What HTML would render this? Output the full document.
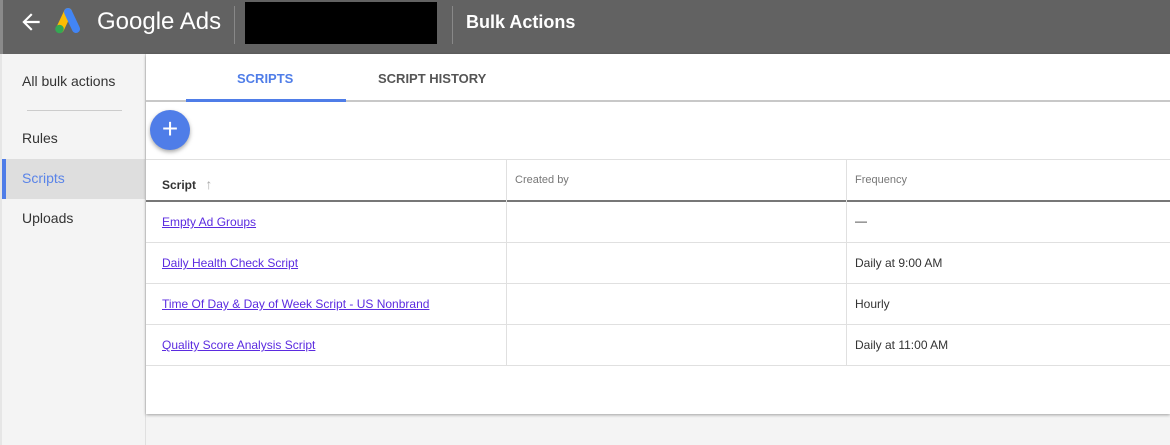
<!DOCTYPE html>
<html><head><style>
*{margin:0;padding:0;box-sizing:border-box}
body{width:1170px;height:445px;overflow:hidden;background:#f4f4f4;font-family:"Liberation Sans",Arial,sans-serif;position:relative}
.hdr{position:absolute;left:0;top:0;width:1170px;height:54px;background:#626262;border-left:3px solid #8a8a8a}
.side{position:absolute;left:0;top:54px;width:146px;height:391px;background:#f4f4f4;border-left:2px solid #e6e6e6;border-right:1px solid #e0e0e0}
.side div{position:absolute;left:20px;font-size:14px;color:#333}
.main{position:absolute;left:146px;top:54px;width:1024px;height:360px;background:#fff;box-shadow:0 1px 3px rgba(0,0,0,.35)}
.t{position:absolute;font-size:12px;color:#333}
.a{color:#5b2be0;text-decoration:underline}
.hl{position:absolute;left:0;width:1024px;height:1px;background:#e0e0e0}
.vl{position:absolute;width:1px;background:#e0e0e0;top:106px;height:206px}
</style></head><body>
<div class="hdr">
<svg style="position:absolute;left:15px;top:9px" width="26" height="26" viewBox="0 0 24 24"><path d="M20 11H7.8l5.6-5.6L12 4l-8 8 8 8 1.4-1.4L7.8 13H20z" fill="#fff"/></svg>
<svg style="position:absolute;left:49px;top:5px" width="30" height="30" viewBox="0 0 30 30"><path d="M8 24 L16 7" stroke="#fbbc04" stroke-width="8" stroke-linecap="round"/><path d="M16 7 L24 24" stroke="#4285f4" stroke-width="8" stroke-linecap="round"/><circle cx="7.5" cy="24" r="4.3" fill="#34a853"/></svg>
<div style="position:absolute;left:94px;top:8px;font-size:24px;color:#fff">Google Ads</div>
<div style="position:absolute;left:231px;top:6px;width:1px;height:38px;background:#888"></div>
<div style="position:absolute;left:242px;top:2px;width:192px;height:42px;background:#000"></div>
<div style="position:absolute;left:449px;top:6px;width:1px;height:38px;background:#888"></div>
<div style="position:absolute;left:463px;top:12px;font-size:18px;font-weight:bold;color:#fff">Bulk Actions</div>
</div>
<div class="side">
<div style="top:19px">All bulk actions</div>
<div style="left:25px;top:56px;width:95px;height:1px;background:#ccc"></div>
<div style="top:76px">Rules</div>
<div style="left:0;top:105px;width:144px;height:40px;background:#dedede;border-left:4px solid #4f7de8"></div>
<div style="top:116px;color:#5a84e8">Scripts</div>
<div style="top:156px">Uploads</div>
</div>
<div class="main">
<div class="t" style="left:91px;top:17px;font-size:13px;font-weight:bold;color:#4f7de8">SCRIPTS</div>
<div class="t" style="left:232px;top:17px;font-size:13px;font-weight:bold;color:#555">SCRIPT HISTORY</div>
<div style="position:absolute;left:0;top:46px;width:1024px;height:2px;background:#c8c8c8"></div>
<div style="position:absolute;left:40px;top:45px;width:160px;height:3px;background:#4f7de8"></div>
<div style="position:absolute;left:4px;top:56px;width:40px;height:40px;border-radius:50%;background:#4f7de8;box-shadow:0 2px 4px rgba(0,0,0,.35);color:#fff;font-size:28px;line-height:38px;text-align:center">+</div>
<div class="hl" style="top:105px"></div>
<div class="t" style="left:16px;top:122px;font-weight:bold">Script <span style="color:#aaa;font-weight:normal;font-size:14px;margin-left:6px">↑</span></div>
<div class="t" style="left:369px;top:120px;color:#777;font-size:11px">Created by</div>
<div class="t" style="left:709px;top:120px;color:#777;font-size:11px">Frequency</div>
<div style="position:absolute;left:0;top:146px;width:1024px;height:2px;background:#777"></div>
<div class="vl" style="left:360px"></div><div class="vl" style="left:700px"></div>
<div class="t a" style="left:16px;top:161px">Empty Ad Groups</div><div class="t" style="left:709px;top:160px">—</div>
<div class="hl" style="top:188px"></div>
<div class="t a" style="left:16px;top:202px">Daily Health Check Script</div><div class="t" style="left:709px;top:202px">Daily at 9:00 AM</div>
<div class="hl" style="top:229px"></div>
<div class="t a" style="left:16px;top:243px">Time Of Day &amp; Day of Week Script - US Nonbrand</div><div class="t" style="left:709px;top:243px">Hourly</div>
<div class="hl" style="top:270px"></div>
<div class="t a" style="left:16px;top:284px">Quality Score Analysis Script</div><div class="t" style="left:709px;top:284px">Daily at 11:00 AM</div>
<div class="hl" style="top:311px"></div>
</div>
</body></html>
